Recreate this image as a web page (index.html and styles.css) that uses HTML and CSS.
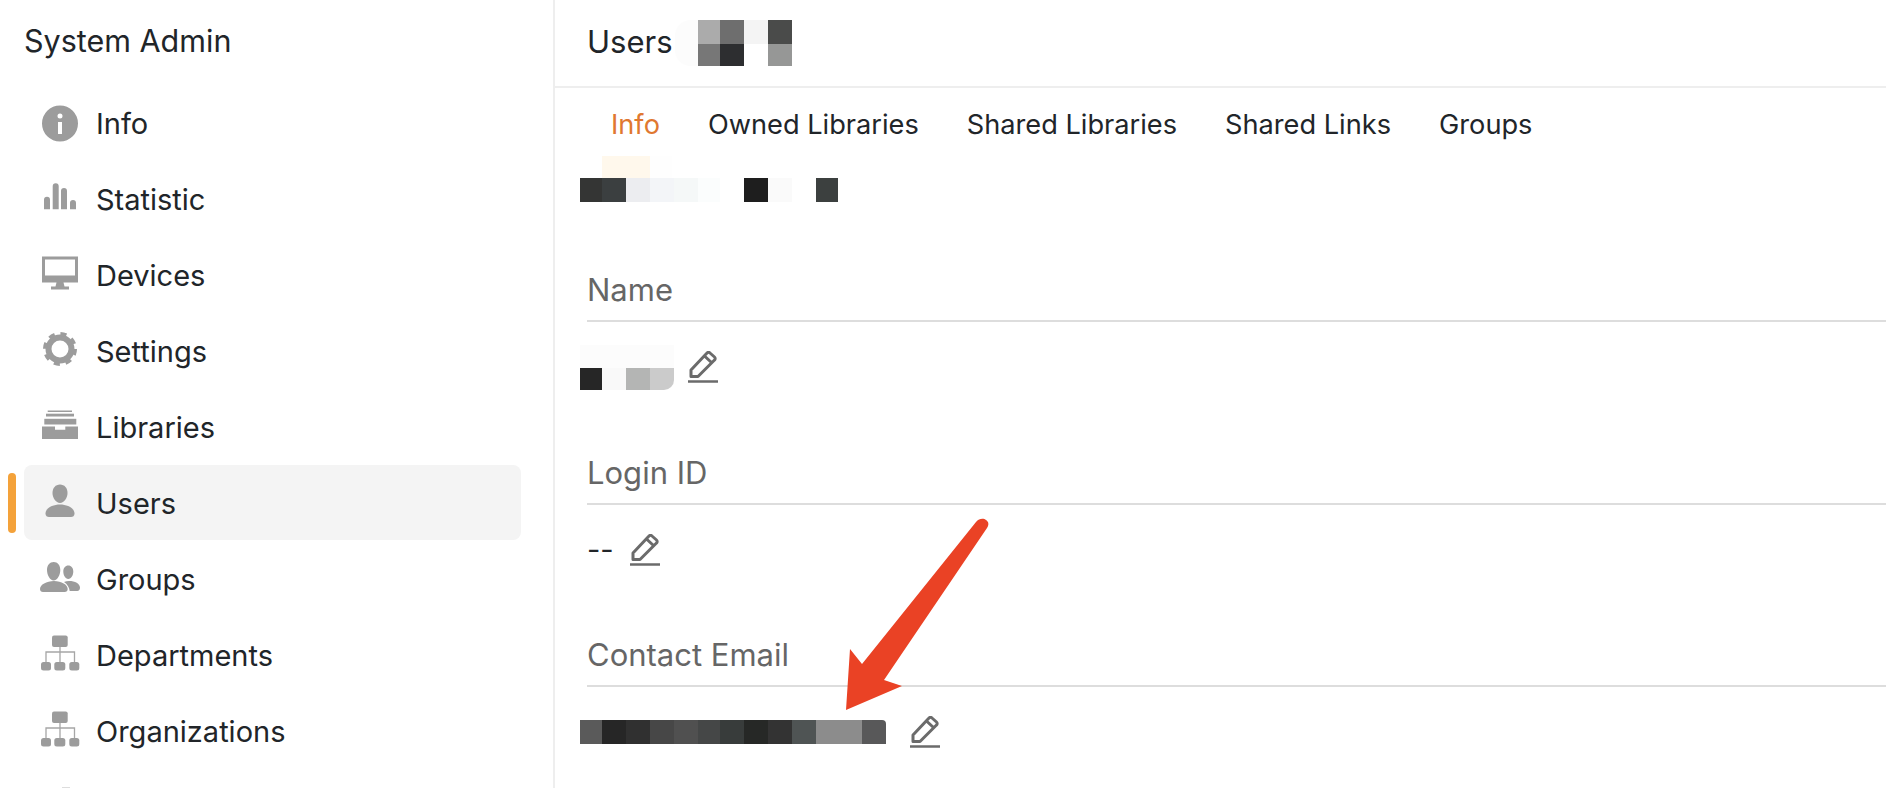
FILE: index.html
```html
<!DOCTYPE html>
<html lang="en">
<head>
<meta charset="utf-8">
<title>System Admin - Users</title>
<link rel="stylesheet" href="styles.css">
</head>
<body>
<div class="app">
  <aside class="sidebar">
    <h1 class="brand">System Admin</h1>
    <ul class="nav">
      <li class="nav-item"><svg class="nav-icon" viewBox="0 0 36 36"><path fill-rule="evenodd" d="M18 -.5a18 18 0 1 1 0 36 18 18 0 0 1 0-36zm0 8a2.500 2.500 0 1 0 0 5 2.500 2.500 0 0 0 0-5zM16 16v12h4V16z"/></svg><span>Info</span></li>
      <li class="nav-item"><svg class="nav-icon" viewBox="0 0 36 36"><path d="M2 27.300V17.700a3 3 0 0 1 6 0v9.600zM10.700 27.300V4.300a3 3 0 0 1 6 0v23zM19 27.300V9a3 3 0 0 1 6 0v18.300zM28 27.300V21a3 3 0 0 1 6 0v6.300z"/></svg><span>Statistic</span></li>
      <li class="nav-item"><svg class="nav-icon" viewBox="0 0 36 36"><path fill-rule="evenodd" d="M0-1.500h36v26H0zM3 1.500v16h30v-16zM14.500 24.500h7l1 4H27v3H9v-3h4.500z"/></svg><span>Devices</span></li>
      <li class="nav-item"><svg class="nav-icon" viewBox="0 0 36 36"><circle class="gear-ring" cx="18" cy="15" r="11.500"/><circle class="gear-teeth" cx="18" cy="15" r="15"/></svg><span>Settings</span></li>
      <li class="nav-item"><svg class="nav-icon" viewBox="0 0 36 36"><rect x="5.700" y=".5" width="24.300" height="1.500"/><rect x="4" y="3.700" width="28" height="2.800"/><rect x="2.300" y="8.800" width="32" height="5.700"/><path d="M0 16.500h13v3.300h10.300v-3.300H36V29H0z"/></svg><span>Libraries</span></li>
      <li class="nav-item is-active"><svg class="nav-icon" viewBox="0 0 36 36"><path d="M18-1.500c4.500 0 7.500 3.500 7.500 8.500 0 4.800-3.300 10-7.500 10s-7.500-5.200-7.500-10c0-5 3-8.500 7.500-8.500z"/><path d="M18 18.500c8 0 14.500 4 14.500 9 0 2.500-1.500 3.500-3.500 3.500H7c-2 0-3.500-1-3.500-3.500 0-5 6.500-9 14.500-9z"/></svg><span>Users</span></li>
      <li class="nav-item"><svg class="nav-icon nav-icon-wide" viewBox="0 0 40 36"><path d="M13.700 0c3.900 0 6.600 3.200 6.600 8s-2.900 10.500-6.600 10.500S7 12.800 7 8s2.800-8 6.700-8zM14 19c7.500 0 13.700 3.700 13.700 8 0 2-1.200 3-3 3H3c-1.800 0-3-1-3-3 0-4.300 6.500-8 14-8z"/><path d="M28.300 3.500c2.900 0 5 2.500 5 6s-2 7.500-5 7.500-5-4-5-7.500 2.100-6 5-6zM29 19c6 0 11 2.700 11 6.500 0 2.300-1 3.500-2.800 3.500h-7.500c-.5-3.800-2.400-6.800-5.700-9 1.500-.7 3.200-1 5-1z"/></svg><span>Groups</span></li>
      <li class="nav-item"><svg class="nav-icon nav-icon-wide" viewBox="0 0 40 36"><rect x="12" y="-2.500" width="15.700" height="11.500" rx="2"/><path class="org-line" d="M6 24v-10h28.500v10M20 9v15"/><rect x="1" y="24" width="10" height="8.500" rx="2.500"/><rect x="14.300" y="24" width="11" height="8.500" rx="2.500"/><rect x="29.300" y="24" width="10" height="8.500" rx="2.500"/></svg><span>Departments</span></li>
      <li class="nav-item"><svg class="nav-icon nav-icon-wide" viewBox="0 0 40 36"><rect x="12" y="-2.500" width="15.700" height="11.500" rx="2"/><path class="org-line" d="M6 24v-10h28.500v10M20 9v15"/><rect x="1" y="24" width="10" height="8.500" rx="2.500"/><rect x="14.300" y="24" width="11" height="8.500" rx="2.500"/><rect x="29.300" y="24" width="10" height="8.500" rx="2.500"/></svg><span>Organizations</span></li>
      <li class="nav-stub"><span class="nav-peek"></span></li>
    </ul>
  </aside>
  <main class="main">
    <header class="page-head">
      <span class="page-title">Users</span>
      <span class="mosaic mosaic-user"></span>
    </header>
    <nav class="tabs">
      <a class="tab is-current">Info</a>
      <a class="tab">Owned Libraries</a>
      <a class="tab">Shared Libraries</a>
      <a class="tab">Shared Links</a>
      <a class="tab">Groups</a>
    </nav>
    <span class="mosaic mosaic-sub"></span>
    <div class="fields">
      <section class="field">
        <h2 class="field-label">Name</h2>
        <div class="field-value">
          <span class="mosaic mosaic-name"></span>
          <svg class="edit edit-name" viewBox="0 0 32 32"><path d="M4 25.500V19L20 2a2 2 0 0 1 3 0l4.500 4a2 2 0 0 1 0 3L11 25.500zM17.500 5l7.500 7"/><path class="edit-base" d="M1 30.500h30"/></svg>
        </div>
      </section>
      <section class="field">
        <h2 class="field-label">Login ID</h2>
        <div class="field-value">
          <span class="dash">--</span>
          <svg class="edit edit-login" viewBox="0 0 32 32"><path d="M4 25.500V19L20 2a2 2 0 0 1 3 0l4.500 4a2 2 0 0 1 0 3L11 25.500zM17.500 5l7.500 7"/><path class="edit-base" d="M1 30.500h30"/></svg>
        </div>
      </section>
      <section class="field">
        <h2 class="field-label">Contact Email</h2>
        <div class="field-value">
          <span class="mosaic mosaic-email"></span>
          <svg class="edit edit-email" viewBox="0 0 32 32"><path d="M4 25.500V19L20 2a2 2 0 0 1 3 0l4.500 4a2 2 0 0 1 0 3L11 25.500zM17.500 5l7.500 7"/><path class="edit-base" d="M1 30.500h30"/></svg>
        </div>
      </section>
    </div>
    <svg class="arrow" viewBox="0 0 160 210"><path d="M6 200 10 139 22 154 136 12C139 8 144 8 146 10 149 12 149 15 147 18L44 170 62 176z"/></svg>
  </main>
</div>
</body>
</html>
```
FILE: styles.css
```css
* { box-sizing: border-box; }
html, body { height: 100%; margin: 0; overflow: hidden; }
body { background: #fff; color: #212529; font-family: Inter, "Liberation Sans", sans-serif; }
.app { display: flex; height: 788px; }

.sidebar { width: 555px; flex: none; border-right: 2px solid #eee; padding: 0 32px 0 24px; }
.brand { margin: 0; height: 85px; padding-top: 21px; font-size: 30.5px; font-weight: 400; line-height: 40px; }
.nav { list-style: none; margin: 0; padding: 0; display: flex; flex-direction: column; gap: 1px; }
.nav-item { position: relative; display: flex; flex: none; align-items: center; gap: 18px; height: 75px; padding: 2px 0 0 18px; border-radius: 8px; font-size: 29px; }
.nav-item.is-active { background: #f4f4f4; }
.nav-item.is-active::before { content: ""; position: absolute; left: -16px; top: 8px; width: 8px; height: 60px; border-radius: 4px; background: #f4a23a; }
.nav-icon { width: 36px; height: 36px; flex: none; fill: #9c9c9c; overflow: visible; }
.nav-icon-wide { width: 40px; margin: 0 -2px; }
.org-line { fill: none; stroke: #a6a6a6; stroke-width: 1.3; }
.gear-ring { fill: none; stroke: #9c9c9c; stroke-width: 6; }
.gear-teeth { fill: none; stroke: #9c9c9c; stroke-width: 4; stroke-dasharray: 6 5.780; }
.nav-stub { display: flex; align-items: flex-end; height: 19px; padding-left: 38px; }
.nav-peek { width: 8px; height: 1px; background: #ddd; }

.main { position: relative; flex: 1; min-width: 0; padding-left: 32px; }
.page-head { display: flex; align-items: center; height: 88px; margin-left: -32px; padding-left: 32px; border-bottom: 2px solid #eee; font-size: 31px; }
.page-title { line-height: 40px; margin-top: -2px; }
.tabs { display: flex; gap: 48px; height: 68px; align-items: center; padding: 5px 0 0 24px; font-size: 27.2px; }
.tab { color: #212529; }
.tab.is-current { color: #e07830; }

.mosaic { display: block; flex: none; margin-left: -7px; }
.mosaic-user { width: 117px; height: 46px; margin-left: 2px;
  background:
    linear-gradient(90deg, transparent 0 23px, #ababab 23px 45px, #6e6e6e 45px 69px, #f4f4f4 69px 93px, #4a4b4a 93px 117px) top / 100% 24px no-repeat,
    linear-gradient(90deg, transparent 0 23px, #777 23px 45px, #2d2e30 45px 69px, #fff 69px 93px, #969796 93px 117px) bottom / 100% 22px no-repeat,
    linear-gradient(90deg, #fcfcfc, #fcfcfc) left / 23px 100% no-repeat;
  border-radius: 16px 0 0 16px; }
.mosaic-sub { width: 258px; height: 46px;
  background:
    linear-gradient(90deg, transparent 0 22px, #fff8ec 22px 70px, #fefefe 70px 92px, transparent 92px) top / 100% 22px no-repeat,
    linear-gradient(90deg, #343534 0 22px, #3b3f40 22px 46px, #ecedf0 46px 70px, #f3f5f8 70px 94px, #f5f8f8 94px 118px, #fbfdfd 118px 140px, #fff 140px 164px, #1e1e1e 164px 188px, #fafafa 188px 212px, #fff 212px 236px, #3c403f 236px 258px) bottom / 100% 24px no-repeat; border-radius: 0 4px 0 0; }
.mosaic-name { width: 94px; height: 45px; border-radius: 0 0 10px 0;
  background:
    linear-gradient(#fcfcfc, #fcfcfc) top / 100% 23px no-repeat,
    linear-gradient(90deg, #262626 0 22px, #f9f9f9 22px 46px, #b4b5b4 46px 70px, #cbcbcb 70px 94px) bottom / 100% 22px no-repeat; }
.mosaic-email { width: 306px; height: 24px; border-radius: 0 4px 0 0;
  background: linear-gradient(90deg, #5a5a5a 0 22px, #262626 22px 46px, #303030 46px 70px, #474747 70px 94px, #505050 94px 118px, #454747 118px 140px, #383c3b 140px 164px, #262826 164px 188px, #333 188px 212px, #4f5454 212px 236px, #8c8c8c 236px 282px, #585859 282px 306px); }

.fields { margin-top: 68px; }
.field { height: 182.5px; }
.field-label { margin: 0; height: 52px; border-bottom: 2px solid #ddd; color: #666; font-size: 31px; font-weight: 400; line-height: 40px; }
.field-value { display: flex; align-items: center; height: 90px; }
.dash { font-size: 29px; }
.edit { width: 32px; height: 32px; flex: none; fill: none; stroke: #6b6b6b; stroke-width: 3; stroke-linejoin: round; }
.edit-base { stroke-width: 2.500; }
.edit-name { margin-left: 13px; }
.edit-login { margin-left: 15px; }
.edit-email { margin-left: 23px; }

.arrow { position: absolute; left: 285px; top: 510px; width: 160px; height: 210px; fill: #ea4225; }
```
